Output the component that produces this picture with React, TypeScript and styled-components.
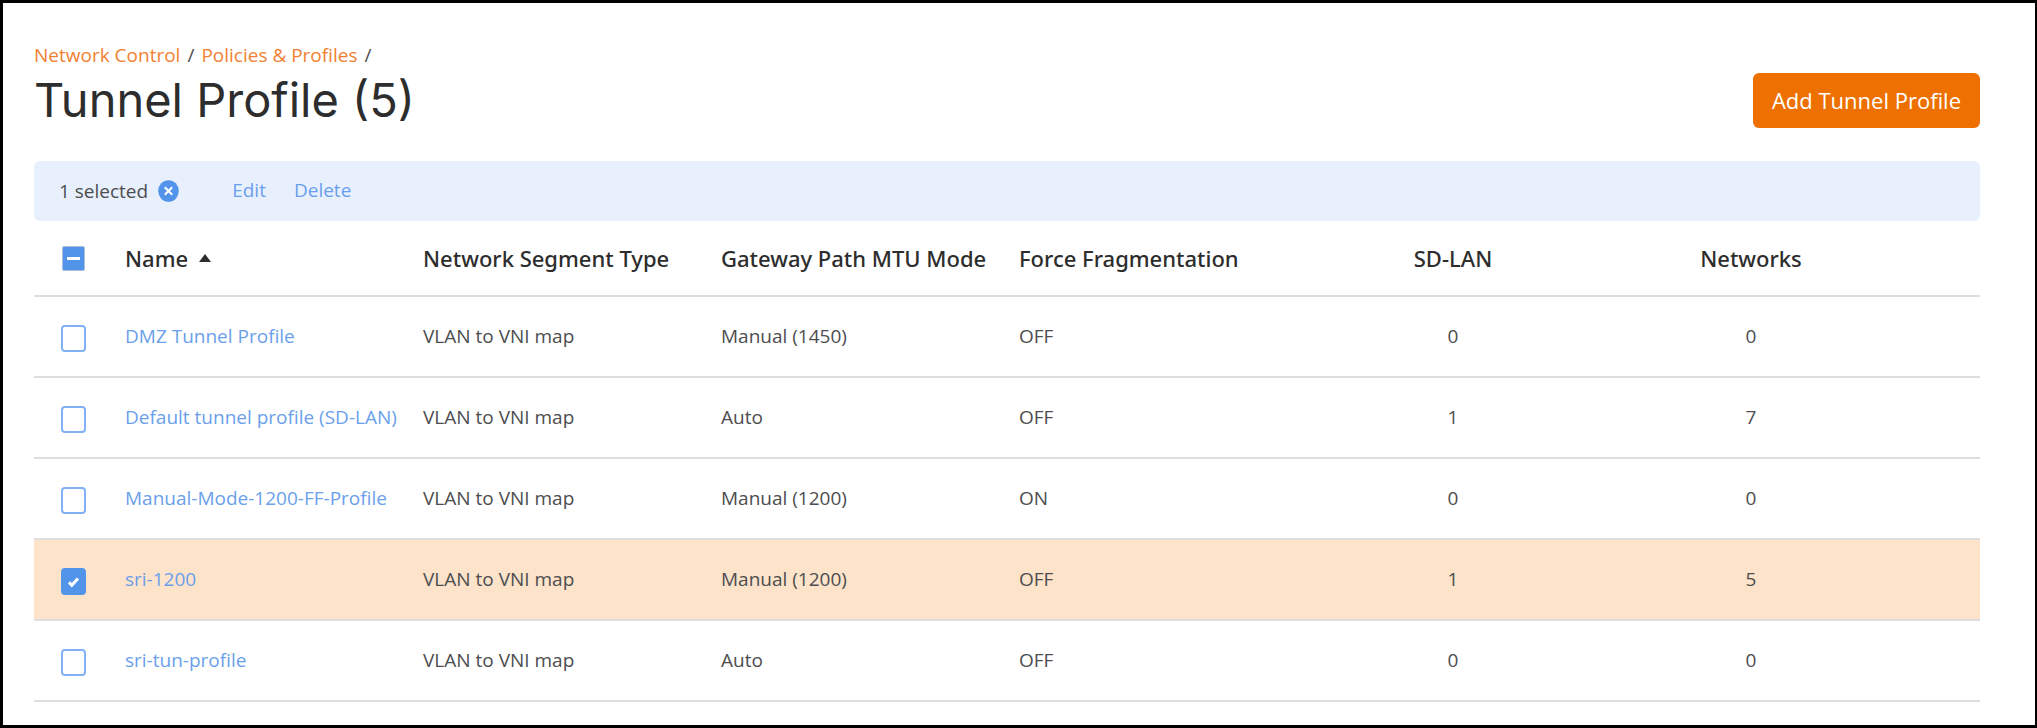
import React, { useEffect, useRef, useState } from 'react';
import styled, { createGlobalStyle } from 'styled-components';

const GlobalStyle = createGlobalStyle`
  *, *::before, *::after { box-sizing: border-box; }
  body {
    margin: 0;
    background: #fff;
    color: #4d4d4f;
    font-family: 'Open Sans', 'Noto Sans', sans-serif;
    font-size: 19px;
    line-height: 26px;
  }
`;

const Frame = styled.main`
  min-height: 100vh;
  padding: 39px 55px 20px 31px;
  border: 3px solid #000;
  border-right-width: 2px;
`;

const Header = styled.header`
  display: flex;
  align-items: flex-end;
  justify-content: space-between;
  margin-bottom: 33px;
`;

const Breadcrumb = styled.nav`
  display: flex;
  gap: 7px;
  color: #4d4d4f;
`;

const BreadcrumbLink = styled.a`
  color: #f28132;
  text-decoration: none;
`;

const Title = styled.h1`
  margin: 4px 0 0;
  color: #2d2d2d;
  font-family: Inter, 'Open Sans', sans-serif;
  font-size: 47px;
  font-weight: 400;
  line-height: 56px;
`;

const PrimaryButton = styled.button`
  height: 55px;
  padding: 0 19px 2px;
  border: 0;
  border-radius: 6px;
  background: #ed7000;
  color: #fff;
  font-family: inherit;
  font-size: 22px;
  line-height: 30px;
  cursor: pointer;
`;

const SelectionBar = styled.div`
  display: flex;
  align-items: center;
  min-height: 60px;
  padding: 0 25px;
  border-radius: 6px;
  background: #e8f0fe;
`;

const ClearButton = styled.button`
  display: grid;
  margin: 0 53px 0 10px;
  padding: 0;
  border: 0;
  border-radius: 50%;
  background: none;
  cursor: pointer;
`;

const BarActions = styled.div`
  display: flex;
  gap: 28px;
  padding-bottom: 2px;
`;

const TextButton = styled.button`
  padding: 0;
  border: 0;
  background: none;
  color: #6b9feb;
  font: inherit;
  cursor: pointer;
`;

const Table = styled.table`
  width: 100%;
  table-layout: fixed;
  border-collapse: separate;
  border-spacing: 0;
`;

const CheckColumn = styled.col`
  width: 78px;
`;

const EndColumn = styled.col`
  width: 80px;
`;

const HeadCell = styled.th<{ $center?: boolean }>`
  height: 76px;
  padding: 0 13px 1px;
  border-bottom: 2px solid #dedede;
  color: #2d2d2d;
  font-family: 'Noto Sans', sans-serif;
  font-size: 22px;
  font-weight: 500;
  line-height: 30px;
  text-align: ${(p) => (p.$center ? 'center' : 'left')};
  white-space: nowrap;
`;

const SortButton = styled.button`
  display: flex;
  align-items: center;
  gap: 11px;
  padding: 0;
  border: 0;
  background: none;
  color: inherit;
  font: inherit;
  cursor: pointer;
`;

const Row = styled.tr<{ $selected: boolean }>`
  background: ${(p) => (p.$selected ? '#fce3ca' : 'transparent')};
`;

const Cell = styled.td<{ $center?: boolean }>`
  height: 81px;
  padding: 0 13px 2px;
  border-bottom: 2px solid #dedede;
  text-align: ${(p) => (p.$center ? 'center' : 'left')};
  white-space: nowrap;
`;

const CheckCell = styled(Cell)`
  padding: 4px 0 0 27px;
`;

const CheckHeadCell = styled(HeadCell)`
  padding: 0 0 0 27px;
`;

const RowLink = styled.a`
  color: #6b9feb;
  text-decoration: none;
`;

const CheckLabel = styled.label`
  display: grid;
  width: 25px;
  place-items: center;
  cursor: pointer;

  > * { grid-area: 1 / 1; }
  > svg { pointer-events: none; }
`;

const CheckInput = styled.input<{ $filled: boolean; $small: boolean }>`
  appearance: none;
  width: ${(p) => (p.$small ? 23 : 25)}px;
  height: ${(p) => (p.$small ? 25 : 27)}px;
  margin: 0;
  border: ${(p) => (p.$small ? 1 : 2)}px solid;
  border-color: ${(p) => (p.$small ? '#a9bedb' : p.$filled ? '#5294ea' : '#81b1f4')};
  border-radius: ${(p) => (p.$small ? 2 : 4)}px;
  background: ${(p) => (p.$filled ? '#5294ea' : '#fff')};
  cursor: pointer;
`;

const CheckIcon = () => (
  <svg width="13" height="12" viewBox="0 0 13 12" aria-hidden="true">
    <path d="M2 6.2 4.8 9.3 11 2.4" fill="none" stroke="#fff" strokeWidth="3" />
  </svg>
);

const MinusIcon = () => (
  <svg width="13" height="3" viewBox="0 0 13 3" aria-hidden="true">
    <rect width="13" height="3" fill="#fff" />
  </svg>
);

const SortIcon = () => (
  <svg width="12" height="8" viewBox="0 0 12 8" aria-hidden="true">
    <path d="M0 8 6 0l6 8z" fill="#2d2d2d" />
  </svg>
);

const ClearIcon = () => (
  <svg width="21" height="22" viewBox="0 0 21 22" aria-hidden="true">
    <ellipse cx="10.5" cy="11" rx="10.3" ry="10.8" fill="#5294ea" />
    <path d="m6.8 7.2 7.4 7.6m0-7.6-7.4 7.6" stroke="#fff" strokeWidth="2" />
  </svg>
);

interface CheckProps {
  label: string;
  checked: boolean;
  partial?: boolean;
  onChange: () => void;
}

function Check({ label, checked, partial = false, onChange }: CheckProps) {
  const ref = useRef<HTMLInputElement>(null);
  useEffect(() => {
    if (ref.current) ref.current.indeterminate = partial;
  }, [partial]);
  return (
    <CheckLabel>
      <CheckInput
        ref={ref}
        type="checkbox"
        aria-label={label}
        checked={checked}
        onChange={onChange}
        $filled={checked || partial}
        $small={partial}
      />
      {partial ? <MinusIcon /> : checked && <CheckIcon />}
    </CheckLabel>
  );
}

interface Profile {
  name: string;
  segment: string;
  mtu: string;
  fragmentation: string;
  sdLan: number;
  networks: number;
}

const profiles: Profile[] = [
  { name: 'DMZ Tunnel Profile', segment: 'VLAN to VNI map', mtu: 'Manual (1450)', fragmentation: 'OFF', sdLan: 0, networks: 0 },
  { name: 'Default tunnel profile (SD-LAN)', segment: 'VLAN to VNI map', mtu: 'Auto', fragmentation: 'OFF', sdLan: 1, networks: 7 },
  { name: 'Manual-Mode-1200-FF-Profile', segment: 'VLAN to VNI map', mtu: 'Manual (1200)', fragmentation: 'ON', sdLan: 0, networks: 0 },
  { name: 'sri-1200', segment: 'VLAN to VNI map', mtu: 'Manual (1200)', fragmentation: 'OFF', sdLan: 1, networks: 5 },
  { name: 'sri-tun-profile', segment: 'VLAN to VNI map', mtu: 'Auto', fragmentation: 'OFF', sdLan: 0, networks: 0 },
];

export default function App() {
  const [selected, setSelected] = useState<string[]>(['sri-1200']);
  const all = selected.length === profiles.length;
  const toggle = (name: string) =>
    setSelected((s) => (s.includes(name) ? s.filter((n) => n !== name) : [...s, name]));

  return (
    <>
      <GlobalStyle />
      <Frame>
        <Header>
          <div>
            <Breadcrumb aria-label="Breadcrumb">
              <BreadcrumbLink href="#network-control">Network Control</BreadcrumbLink>
              <span>/</span>
              <BreadcrumbLink href="#policies">Policies &amp; Profiles</BreadcrumbLink>
              <span>/</span>
            </Breadcrumb>
            <Title>Tunnel Profile ({profiles.length})</Title>
          </div>
          <PrimaryButton type="button">Add Tunnel Profile</PrimaryButton>
        </Header>

        <SelectionBar>
          <span>{selected.length} selected</span>
          <ClearButton type="button" aria-label="Clear selection" onClick={() => setSelected([])}>
            <ClearIcon />
          </ClearButton>
          <BarActions>
            <TextButton type="button">Edit</TextButton>
            <TextButton type="button">Delete</TextButton>
          </BarActions>
        </SelectionBar>

        <Table>
          <colgroup>
            <CheckColumn />
            <col span={6} />
            <EndColumn />
          </colgroup>
          <thead>
            <tr>
              <CheckHeadCell>
                <Check
                  label="Select all"
                  checked={all}
                  partial={selected.length > 0 && !all}
                  onChange={() => setSelected(all ? [] : profiles.map((p) => p.name))}
                />
              </CheckHeadCell>
              <HeadCell aria-sort="ascending">
                <SortButton type="button">
                  Name
                  <SortIcon />
                </SortButton>
              </HeadCell>
              <HeadCell>Network Segment Type</HeadCell>
              <HeadCell>Gateway Path MTU Mode</HeadCell>
              <HeadCell>Force Fragmentation</HeadCell>
              <HeadCell $center>SD-LAN</HeadCell>
              <HeadCell $center>Networks</HeadCell>
              <HeadCell />
            </tr>
          </thead>
          <tbody>
            {profiles.map((p) => (
              <Row key={p.name} $selected={selected.includes(p.name)}>
                <CheckCell>
                  <Check
                    label={`Select ${p.name}`}
                    checked={selected.includes(p.name)}
                    onChange={() => toggle(p.name)}
                  />
                </CheckCell>
                <Cell>
                  <RowLink href="#profile">{p.name}</RowLink>
                </Cell>
                <Cell>{p.segment}</Cell>
                <Cell>{p.mtu}</Cell>
                <Cell>{p.fragmentation}</Cell>
                <Cell $center>{p.sdLan}</Cell>
                <Cell $center>{p.networks}</Cell>
                <Cell />
              </Row>
            ))}
          </tbody>
        </Table>
      </Frame>
    </>
  );
}
